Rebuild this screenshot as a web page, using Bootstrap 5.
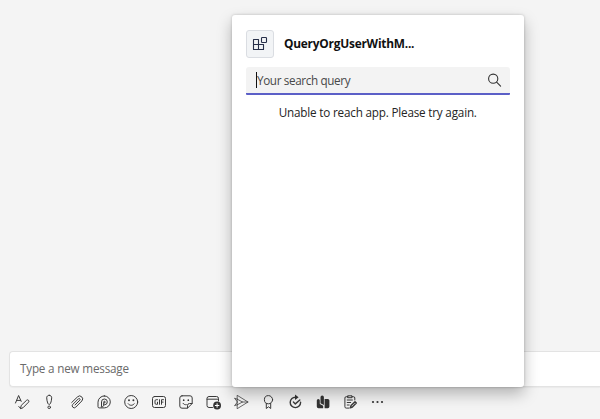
<!DOCTYPE html>
<html lang="en">
<head>
<meta charset="utf-8">
<meta name="viewport" content="width=device-width, initial-scale=1">
<title>New message</title>
<link href="https://cdn.jsdelivr.net/npm/bootstrap@5.3.0/dist/css/bootstrap.min.css" rel="stylesheet">
<style>
body{background:#f4f4f4;font-family:"Open Sans","Noto Sans",sans-serif;font-size:11.7px;line-height:16px;letter-spacing:-.19px;color:#252423}
.compose-box{height:36px;margin-left:9px;padding:0 0 2px 10px;border:1px solid #e3e3e3;border-right:0;border-radius:4px 0 0 4px;color:#6a6a6a;box-shadow:0 1px 1px rgba(0,0,0,.04)}
.tools{height:32px;padding-left:8.3px}
.tool{width:27.35px;height:29px;flex:none}
.tool svg{width:16px;height:16px;fill:none;stroke:#3a3a3a;stroke-width:1;stroke-linecap:round;stroke-linejoin:round}
.tool svg .solid{fill:#333;stroke:none}
.tool svg .knockout{stroke:#fff}
.tool svg .fine{stroke-width:.75}
.tool svg .heavy{stroke-width:1.4}
.app-panel{left:232px;top:15px;width:292px;height:372px;padding:15px 14.5px 0 14px;border-radius:3px;box-shadow:0 7px 15px rgba(0,0,0,.27),0 0 3px rgba(0,0,0,.2)}
.app-logo{width:28px;height:28px;background:#f2f4f6;border:1px solid #dadde2;border-radius:3px}
.app-name{margin-left:10px;padding-bottom:2px;font-size:11.9px;font-weight:700;letter-spacing:-.23px;color:#111}
.search-field{height:28px;margin-top:9px;padding:0 7px 0 10px;background:#f3f3f3;border-bottom:2px solid #5b5fc7;border-radius:3px 3px 1px 1px;color:#484848}
.search-hint{letter-spacing:-.36px}
.caret{width:1px;height:16px;background:#111}
.notice{margin-top:9px}
</style>
<script src="https://cdn.jsdelivr.net/npm/bootstrap@5.3.0/dist/js/bootstrap.bundle.min.js"></script>
</head>
<body class="vh-100 overflow-hidden position-relative d-flex flex-column justify-content-end">
<main>
  <div class="compose-box bg-white d-flex align-items-center">Type a new message</div>
  <div class="tools d-flex align-items-start">
    <!-- format -->
    <div class="tool d-flex align-items-center justify-content-center"><svg viewBox="0 0 16 16"><path d="M1.500 9 4.600 1.500 7.200 7.400M2.600 6.400h3.800M6.500 14.300l.8-3 5.400-5.100a1.350 1.350 0 0 1 1.900 1.900l-5.300 5.400zM6.500 14.300 4.800 12.500"/></svg></div>
    <!-- importance -->
    <div class="tool d-flex align-items-center justify-content-center"><svg viewBox="0 0 16 16"><path d="M8.200 1.300c1.500 0 2.500 1 2.500 2.500 0 2-.6 4.100-1.200 5.700-.4 1.100-2.200 1.100-2.600 0-.6-1.600-1.200-3.700-1.200-5.700C5.700 2.300 6.700 1.300 8.200 1.300z"/><circle cx="8.200" cy="13.300" r="1.300"/></svg></div>
    <!-- attach -->
    <div class="tool d-flex align-items-center justify-content-center"><svg viewBox="0 0 16 16"><path d="M2.700 8.500 8.500 2.900a2.950 2.950 0 0 1 4.300 4.100l-6.100 6.200a2 2 0 0 1-2.900-2.800l5.700-5.700a1 1 0 0 1 1.400 1.400L6 11"/></svg></div>
    <!-- loop -->
    <div class="tool d-flex align-items-center justify-content-center"><svg viewBox="0 0 16 16"><path d="M8.300 1.900a6 6 0 0 1 0 12H3.200a1.200 1.200 0 0 1-1.200-1.200V8.200a6.300 6.300 0 0 1 6.300-6.300z"/><path d="M5.500 11.800V7.900a2.900 2.900 0 1 1 2.900 2.900h-.7c0 1.300-.7 2.200-2.200 2.200zM7.700 10.800V8.300a.8.8 0 1 1 .8.6"/></svg></div>
    <!-- emoji -->
    <div class="tool d-flex align-items-center justify-content-center"><svg viewBox="0 0 16 16"><circle cx="8.200" cy="8" r="6.500"/><path d="M5.200 9.800c1.500 2.100 4.500 2.100 6 0"/><circle class="solid" cx="6" cy="6.300" r=".95"/><circle class="solid" cx="10.400" cy="6.300" r=".95"/></svg></div>
    <!-- gif -->
    <div class="tool d-flex align-items-center justify-content-center"><svg viewBox="0 0 16 16"><rect x="1.500" y="2.500" width="13" height="11" rx="2"/><path d="M6.500 5.700H5.200A1.200 1.200 0 0 0 4 6.900v2.200a1.200 1.200 0 0 0 1.200 1.200h1.300V8.200M8.500 5.700v4.600M10.500 10.300V5.700h2M10.500 8.100h1.600"/></svg></div>
    <!-- sticker -->
    <div class="tool d-flex align-items-center justify-content-center"><svg viewBox="0 0 16 16"><path d="M4 1.800h8a2.200 2.200 0 0 1 2.200 2.200v5.500l-4.700 4.700H4A2.200 2.200 0 0 1 1.800 12V4A2.200 2.200 0 0 1 4 1.800zM9.500 14v-2.500a2 2 0 0 1 2-2H14M5 9.300c.8 1.100 1.900 1.600 3.300 1.400"/><circle class="solid" cx="5.700" cy="6.200" r=".85"/><circle class="solid" cx="10.300" cy="6.200" r=".85"/></svg></div>
    <!-- schedule -->
    <div class="tool d-flex align-items-center justify-content-center"><svg viewBox="0 0 16 16"><path d="M7.500 13.500H4a2 2 0 0 1-2-2v-7a2 2 0 0 1 2-2h7.500a2 2 0 0 1 2 2V7M2 5.200h11.500"/><circle class="solid" cx="12.100" cy="11.500" r="3.900"/><path class="knockout" d="M12.100 9.700v3.600M10.300 11.500h3.600"/></svg></div>
    <!-- stream -->
    <div class="tool d-flex align-items-center justify-content-center"><svg viewBox="0 0 16 16"><path class="fine" d="M4.500 1.500 15 8 4.500 14.500zM4.500 5.300 1.500 4.200 4.500 8 1.500 11.700l3-1M4.500 5.300 9.500 8l-5 2.700M9.500 8H15"/></svg></div>
    <!-- praise -->
    <div class="tool d-flex align-items-center justify-content-center"><svg viewBox="0 0 16 16"><circle cx="8.500" cy="5.700" r="4.100"/><path d="M6.300 9.300v5.200l2.200-1.700 2.200 1.700V9.300"/></svg></div>
    <!-- updates -->
    <div class="tool d-flex align-items-center justify-content-center"><svg viewBox="0 0 16 16"><path class="heavy" d="M8.700 3.200a5.200 5.200 0 1 0 4.900 5.100M6.400 8.100l1.900 1.800L12.800 6"/><path class="solid" d="M8 .6 11.600 3.300 8 6z"/></svg></div>
    <!-- viva -->
    <div class="tool d-flex align-items-center justify-content-center"><svg viewBox="0 0 16 16"><path class="solid" d="M1.800 6.500a1.500 1.500 0 0 1 3 0V10l3.400 1.800v2.400H3.500a1.700 1.700 0 0 1-1.700-1.700zM5.500 3.300a1.700 1.700 0 0 1 3.400 0v7.600L5.500 9.300zM9.600 5h3.200a1.600 1.600 0 0 1 1.600 1.600v6a1.600 1.600 0 0 1-1.600 1.600H9.600z"/></svg></div>
    <!-- approvals -->
    <div class="tool d-flex align-items-center justify-content-center"><svg viewBox="0 0 16 16"><path d="M6 2.700H4.200a1.300 1.300 0 0 0-1.300 1.300v8.800a1.300 1.300 0 0 0 1.300 1.300h3M10 2.700h1.500a1.300 1.300 0 0 1 1.300 1.300v2M6 1.800h4v1.900H6zM5.200 6h5.200M5.200 8.500h3.500M5.200 11h2"/><path class="heavy" d="m8.400 13.800.6-2.200 4-3.900 1.300 1.300-3.900 4z"/></svg></div>
    <!-- more -->
    <div class="tool d-flex align-items-center justify-content-center"><svg viewBox="0 0 16 16"><circle class="solid" cx="4" cy="8" r="1.100"/><circle class="solid" cx="8.500" cy="8" r="1.100"/><circle class="solid" cx="13" cy="8" r="1.100"/></svg></div>
  </div>
</main>
<section class="app-panel position-absolute bg-white">
  <header class="d-flex align-items-center">
    <div class="app-logo d-flex align-items-center justify-content-center">
      <svg width="16" height="16" viewBox="0 0 16 16" fill="none" stroke="#272f49" stroke-width="1.100" stroke-linejoin="round"><path d="M1.500 3.500h5v5h5v5h-10zM1.500 8.500h5v5"/><rect x="9.500" y="1.500" width="5" height="5" rx=".8"/></svg>
    </div>
    <div class="app-name">QueryOrgUserWithM...</div>
  </header>
  <div class="search-field d-flex align-items-center">
    <span class="caret"></span><span class="search-hint">Your search query</span>
    <svg class="ms-auto" width="16" height="16" viewBox="0 0 16 16" fill="none" stroke="#333" stroke-width="1.100" stroke-linecap="round"><circle cx="6.200" cy="6.700" r="4.600"/><path d="m9.600 10.100 4 4"/></svg>
  </div>
  <p class="notice text-center mb-0">Unable to reach app. Please try again.</p>
</section>
</body>
</html>
